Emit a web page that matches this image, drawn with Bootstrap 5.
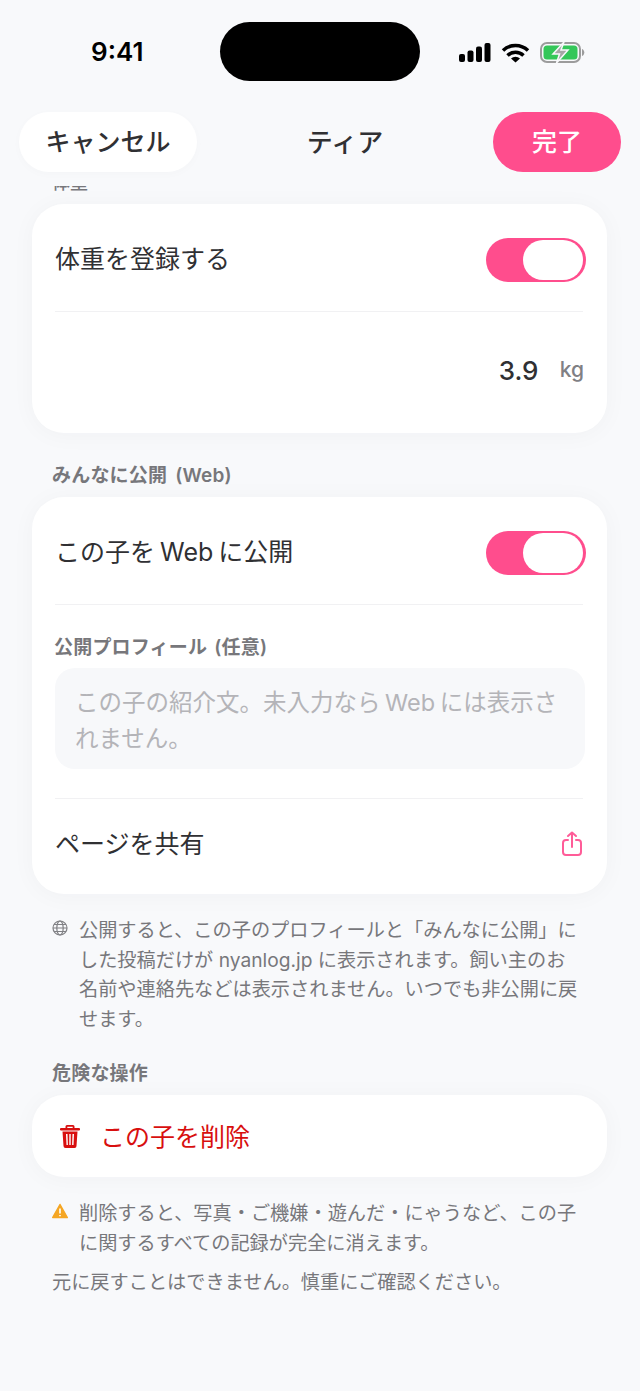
<!DOCTYPE html>
<html lang="ja">
<head>
    <meta charset="UTF-8">
    <meta name="viewport" content="width=device-width, initial-scale=1.0">
    <title>ティア</title>
    <link href="https://cdn.jsdelivr.net/npm/bootstrap@5.3.0/dist/css/bootstrap.min.css" rel="stylesheet">
    <style>
        body { background: #f8f9fb; color: #303033; font-family: Inter, "Noto Sans CJK JP", sans-serif; height: 1391px; overflow: hidden; }
        .status-row { height: 112px; padding: 22px 0 0 91px; }
        .status-time { font-size: 26px; font-weight: 600; color: #000; line-height: 60px; width: 129px; flex: none; }
        .island { width: 200px; height: 59px; background: #000; border-radius: 30px; flex: none; }
        .status-icons { margin-left: 38px; height: 60px; }
        .top-nav { height: 60px; padding: 0 19px; }
        .pill { height: 60px; border-radius: 30px; font-size: 25px; line-height: 60px; text-align: center; font-weight: 500; }
        .pill-cancel { width: 178px; background: #fff; color: #303033; box-shadow: 0 2px 10px rgba(30, 40, 70, .02); }
        .pill-done { width: 128px; background: #ff4d8d; color: #fff; }
        .nav-title { font-size: 26px; font-weight: 500; }
        .clip-label { height: 6px; margin: 14px 0 12px 52px; overflow: hidden; display: flex; align-items: flex-end; font-size: 18px; color: #77777b; font-weight: 500; line-height: 1; }
        .sheet { margin: 0 33px 0 32px; background: #fff; border-radius: 32px; box-shadow: 0 2px 24px rgba(30, 40, 70, .035); }
        .sheet-row { font-size: 25px; padding: 0 21px 0 23px; word-spacing: -2px; }
        .row-switch { height: 107px; padding-top: 5px; }
        .hair { height: 1px; background: #f1f1f3; margin: 0 24px 0 23px; }
        .hair-gap { margin-top: 29px; }
        .pink-switch { width: 100px; height: 44px; border-radius: 22px; background: #ff4d8d; position: relative; display: block; }
        .pink-switch::after { content: ""; position: absolute; right: 3px; top: 2px; width: 60px; height: 40px; border-radius: 20px; background: #fff; }
        .weight-row { height: 121px; padding: 0 23px 5px 0; }
        .weight-val { font-size: 26px; font-weight: 500; width: 38px; }
        .weight-unit { font-size: 21px; color: #808084; font-weight: 500; margin-left: 23px; }
        .group-label { font-size: 19px; font-weight: 600; color: #77777b; line-height: 24px; margin: 31px 0 9px 52px; letter-spacing: .2px; word-spacing: 3px; }
        .group-danger { margin-top: 28px; }
        .sub-label { font-size: 19px; font-weight: 600; color: #77777b; line-height: 24px; padding: 31px 0 8px 22px; letter-spacing: .2px; word-spacing: 2px; }
        .memo-box { margin: 0 22px 0 23px; height: 101px; background: #f7f8fa; border-radius: 20px; padding: 17px 12px 17px 20px; font-size: 23.5px; line-height: 36px; color: #b4b4b8; word-spacing: -2px; }
        .row-share { height: 95px; padding-bottom: 3px; }
        .share-icon { margin: 0 4px 4px 0; }
        .note { font-size: 19.2px; line-height: 29.5px; color: #77777b; margin: 0 56px 0 52px; }
        .note-top { margin-top: 22px; }
        .note-tail { margin-top: 10px; }
        .note-icon { width: 27px; flex: none; }
        .row-danger { height: 82px; color: #d80f0f; padding-left: 28px; }
        .trash-wrap { width: 40px; }
    </style>
</head>
<body>

<!-- Status bar -->
<div class="status-row d-flex">
    <div class="status-time">9:41</div>
    <div class="island"></div>
    <div class="status-icons d-flex align-items-center">
        <svg width="130" height="24" viewBox="0 0 130 24">
            <g fill="#000"><rect x="1" y="14" width="6" height="8" rx="2"/><rect x="9.500" y="10.500" width="6" height="11.500" rx="2"/><rect x="18" y="6.500" width="6" height="15.500" rx="2"/><rect x="26.500" y="3" width="6" height="19" rx="2"/></g>
            <g fill="none" stroke="#000" stroke-width="3.500"><path d="M45 10.500a18 18 0 0 1 25 0"/><path d="M49.500 15.500a11.500 11.500 0 0 1 16 0"/></g>
            <path d="M53 18.500a6.500 6.500 0 0 1 9 0L57.500 22.500z" fill="#000"/>
            <rect x="83" y="3" width="39" height="19" rx="6" fill="none" stroke="#9c9c9c" stroke-width="2"/>
            <rect x="85.500" y="5.500" width="34" height="14" rx="3.500" fill="#34c759"/>
            <path d="M124 9v7c1.500-.5 2.300-2 2.300-3.500S125.500 9.500 124 9z" fill="#9c9c9c"/>
            <path d="M106 2L95 14h6.500l-3 9 11.500-13h-7z" fill="#a6a6a6" stroke="#f8f9fb" stroke-width="1.500"/>
        </svg>
    </div>
</div>

<!-- Top nav -->
<div class="top-nav d-flex align-items-center justify-content-between">
    <div class="pill pill-cancel">キャンセル</div>
    <div class="nav-title">ティア</div>
    <div class="pill pill-done">完了</div>
</div>

<div class="clip-label"><span>体重</span></div>

<!-- Weight -->
<div class="sheet">
    <div class="sheet-row row-switch d-flex align-items-center justify-content-between">
        <span>体重を登録する</span>
        <span class="pink-switch"></span>
    </div>
    <div class="hair"></div>
    <div class="weight-row d-flex align-items-center justify-content-end">
        <span class="weight-val">3.9</span>
        <span class="weight-unit">kg</span>
    </div>
</div>

<!-- Public -->
<div class="group-label">みんなに公開 (Web)</div>
<div class="sheet">
    <div class="sheet-row row-switch d-flex align-items-center justify-content-between">
        <span>この子を Web に公開</span>
        <span class="pink-switch"></span>
    </div>
    <div class="hair"></div>
    <div class="sub-label">公開プロフィール (任意)</div>
    <div class="memo-box">この子の紹介文。未入力なら Web には表示されません。</div>
    <div class="hair hair-gap"></div>
    <div class="sheet-row row-share d-flex align-items-center justify-content-between">
        <span>ページを共有</span>
        <svg class="share-icon" width="20" height="25" viewBox="0 0 20 25" fill="none" stroke="#ff5c98" stroke-width="2" stroke-linecap="round" stroke-linejoin="round">
            <path d="M6 9H4a3 3 0 0 0-3 3v9a3 3 0 0 0 3 3h12a3 3 0 0 0 3-3v-9a3 3 0 0 0-3-3h-2"/>
            <path d="M10 16V1.500M6 5l4-3.500L14 5"/>
        </svg>
    </div>
</div>

<div class="note note-top d-flex">
    <div class="note-icon pt-1">
        <svg class="d-block" width="16" height="16" viewBox="0 0 16 16" fill="none" stroke="#808084" stroke-width="1.200">
            <circle cx="8" cy="8" r="7"/><ellipse cx="8" cy="8" rx="3.200" ry="7"/><path d="M1 8h14M2 4.500h12M2 11.500h12"/>
        </svg>
    </div>
    <div>公開すると、この子のプロフィールと「みんなに公開」にした投稿だけが nyanlog.jp に表示されます。飼い主のお名前や連絡先などは表示されません。いつでも非公開に戻せます。</div>
</div>

<div class="group-label group-danger">危険な操作</div>
<div class="sheet">
    <div class="sheet-row row-danger d-flex align-items-center">
        <span class="trash-wrap">
            <svg class="d-block" width="20" height="23" viewBox="0 0 20 23" fill="#d80f0f">
                <path d="M7 0h6a1.500 1.500 0 0 1 1.500 1.500V3H19a1 1 0 0 1 0 2.500H1A1 1 0 0 1 1 3h4.500V1.500A1.500 1.500 0 0 1 7 0zm.3 1.700V3h5.400V1.700z"/>
                <path fill-rule="evenodd" d="M2.500 6.500h15L16.500 21a2 2 0 0 1-2 2h-9a2 2 0 0 1-2-2zM6 9l.5 11h1.400L7.500 9zm3.300 0v11h1.400V9zm3.200 0l-.4 11h1.400L14 9z"/>
            </svg>
        </span>
        <span class="pt-1">この子を削除</span>
    </div>
</div>

<div class="note note-top d-flex">
    <div class="note-icon pt-1">
        <svg class="d-block" width="16" height="16" viewBox="0 0 16 16">
            <path d="M8 1.500L15.300 14.500H.7z" fill="#f5a623" stroke="#f5a623" stroke-width="1.500" stroke-linejoin="round"/>
            <path d="M8 5.500v5M8 12v1.300" stroke="#fff" stroke-width="1.600"/>
        </svg>
    </div>
    <div>削除すると、写真・ご機嫌・遊んだ・にゃうなど、この子に関するすべての記録が完全に消えます。</div>
</div>
<div class="note note-tail">元に戻すことはできません。慎重にご確認ください。</div>

<script src="https://cdn.jsdelivr.net/npm/bootstrap@5.3.0/dist/js/bootstrap.bundle.min.js"></script>
</body>
</html>
